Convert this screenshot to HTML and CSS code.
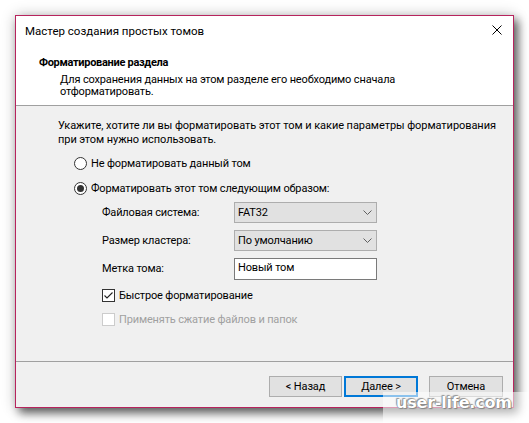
FILE: index.html
```html
<!DOCTYPE html>
<html lang="ru">
<head>
<meta charset="utf-8">
<title>Мастер создания простых томов</title>
<link rel="stylesheet" href="styles.css">
</head>
<body>
<div class="dialog">
  <div class="titlebar">
    <span class="title">Мастер создания простых томов</span>
    <svg class="close" width="10" height="10" viewBox="0 0 10 10"><path d="M0.5 0.5 L9.5 9.5 M9.5 0.5 L0.5 9.5" stroke="#000" stroke-width="1"/></svg>
  </div>
  <div class="header">
    <div class="h-title">Форматирование раздела</div>
    <div class="h-sub">Для сохранения данных на этом разделе его необходимо сначала<br>отформатировать.</div>
  </div>
  <div class="main">
    <p class="intro">Укажите, хотите ли вы форматировать этот том и какие параметры форматирования<br>при этом нужно использовать.</p>
    <div class="radio-row r1"><span class="radio"></span><span>Не форматировать данный том</span></div>
    <div class="radio-row r2"><span class="radio checked"></span><span>Форматировать этот том следующим образом:</span></div>
    <div class="form">
      <span class="lbl">Файловая система:</span>
      <div class="combo"><span>FAT32</span><svg width="9" height="5" viewBox="0 0 9 5"><path d="M0.5 0.5 L4.5 4.5 L8.5 0.5" fill="none" stroke="#606060"/></svg></div>
      <span class="lbl">Размер кластера:</span>
      <div class="combo"><span>По умолчанию</span><svg width="9" height="5" viewBox="0 0 9 5"><path d="M0.5 0.5 L4.5 4.5 L8.5 0.5" fill="none" stroke="#606060"/></svg></div>
      <span class="lbl">Метка тома:</span>
      <div class="textbox">Новый том</div>
    </div>
    <div class="check-row c1"><span class="check checked"><svg width="11" height="11" viewBox="0 0 11 11"><path d="M1.5 5.5 L4 8 L9.5 2.5" fill="none" stroke="#222" stroke-width="1.1"/></svg></span><span>Быстрое форматирование</span></div>
    <div class="check-row c2 disabled"><span class="check"></span><span>Применять сжатие файлов и папок</span></div>
  </div>
  <div class="footer">
    <div class="btn">&lt; Назад</div>
    <div class="btn default">Далее &gt;</div>
    <div class="btn cancel">Отмена</div>
  </div>
</div>
<div class="watermark">user-life.com</div>
</body>
</html>
```
FILE: styles.css
```css
html, body {
  margin: 0;
  padding: 0;
  background: #fff;
}
body {
  width: 529px;
  height: 423px;
  overflow: hidden;
  position: relative;
  font-family: Roboto, "Noto Sans", sans-serif;
  font-size: 11px;
  letter-spacing: -0.15px;
  color: #000;
}
.dialog {
  margin: 15px 0 0 15px;
  width: 497px;
  height: 391px;
  border: 1px solid #b7245d;
  background: #f0f0f0;
  display: flex;
  flex-direction: column;
  box-shadow: 4px 5px 9px rgba(0,0,0,0.6), 0 0 14px rgba(0,0,0,0.2);
}
.titlebar {
  height: 30px;
  background: #fff;
  display: flex;
  align-items: center;
  justify-content: space-between;
  padding: 0 11px 0 9px;
}
.title { font-size: 11.5px; letter-spacing: 0; }
.close { display: block; margin-top: -2px; }
.header {
  background: #fff;
  border-bottom: 1px solid #a0a0a0;
  padding-left: 23px;
  box-sizing: border-box;
  height: 60px;
}
.h-title {
  font-weight: bold;
  line-height: 14px;
  padding-top: 10px;
  letter-spacing: -0.3px;
}
.h-sub {
  padding-left: 21px;
  line-height: 11.5px;
  margin-top: 4px;
}
.main {
  border-bottom: 1px solid #a0a0a0;
  padding-left: 42px;
  box-sizing: border-box;
  height: 256px;
}
.intro {
  margin: 13px 0 0;
  line-height: 14px;
  white-space: nowrap;
  letter-spacing: -0.06px;
}
.radio-row, .check-row {
  display: flex;
  align-items: center;
  height: 16px;
  gap: 4px;
}
.radio-row { margin-left: 16px; }
.r1 { margin-top: 8px; }
.r2 { margin-top: 9px; }
.radio {
  width: 11px;
  height: 11px;
  border: 1px solid #333;
  border-radius: 50%;
  background: #fff;
  position: relative;
}
.radio.checked::after {
  content: "";
  position: absolute;
  left: 2px;
  top: 2px;
  width: 7px;
  height: 7px;
  border-radius: 50%;
  background: #333;
}
.form {
  margin: 6px 0 0 44px;
  display: grid;
  grid-template-columns: 132px 143px;
  grid-template-rows: 21px 21px 22px;
  row-gap: 7px;
  align-items: center;
}
.lbl { line-height: 14px; }
.combo {
  height: 21px;
  box-sizing: border-box;
  border: 1px solid #adadad;
  background: #e1e1e1;
  display: flex;
  align-items: center;
  justify-content: space-between;
  padding: 0 4px 0 3px;
}
.textbox {
  height: 22px;
  box-sizing: border-box;
  border: 1px solid #7a7a7a;
  background: #fff;
  padding: 2px 3px 0;
  line-height: 14px;
}
.check-row { margin-left: 44px; }
.c1 { margin-top: 7px; }
.c2 { margin-top: 8px; }
.check {
  width: 11px;
  height: 11px;
  border: 1px solid #333;
  background: #fff;
  display: flex;
  align-items: center;
  justify-content: center;
}
.check svg { display: block; }
.disabled { color: #a0a0a0; }
.disabled .check { border-color: #cccccc; }
.footer {
  flex: 1;
  display: flex;
  align-items: flex-start;
  padding: 14px 0 0 253px;
}
.btn {
  width: 73px;
  height: 21px;
  box-sizing: border-box;
  border: 1px solid #adadad;
  background: #e1e1e1;
  display: flex;
  align-items: center;
  justify-content: center;
}
.btn.default {
  border: 2px solid #0078d7;
  margin-left: 2px;
  width: 74px;
}
.btn.cancel { margin-left: 11px; width: 74px; }
.watermark {
  position: absolute;
  left: 383px;
  top: 392px;
  width: 146px;
  height: 31px;
  background: rgba(255,255,255,0.55);
  font-family: "DejaVu Sans", sans-serif;
  font-weight: bold;
  font-size: 16px;
  letter-spacing: -0.2px;
  color: #fff;
  text-shadow: 0 0 1px #666, 1px 1px 1px #888, -1px -1px 1px #999;
  padding-left: 13px;
  box-sizing: border-box;
  line-height: 22px;
}
```
